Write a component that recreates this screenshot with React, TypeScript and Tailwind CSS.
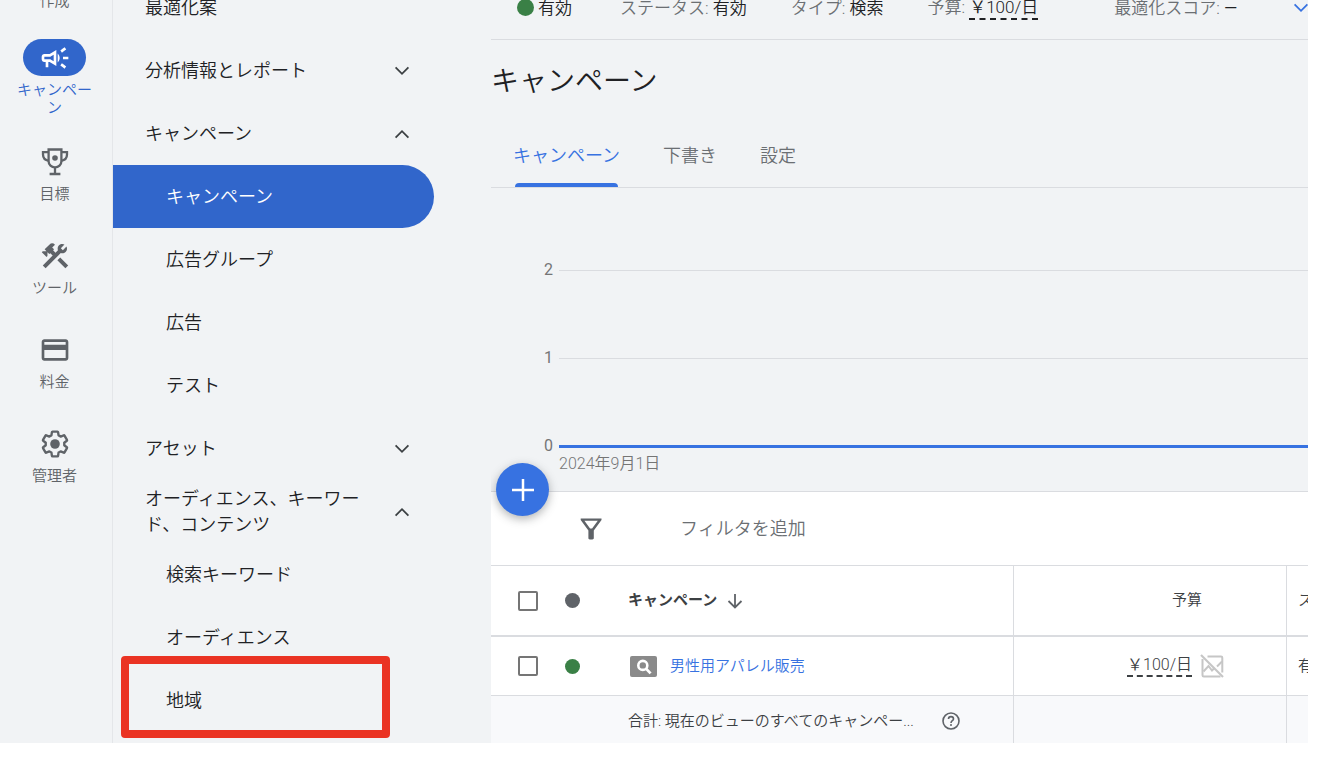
import { useState } from "react";
import type { ReactNode } from "react";
import {
  MdConstruction,
  MdOutlineCampaign,
  MdOutlineCreditCard,
} from "react-icons/md";
import clsx from "clsx";

interface NavEntry {
  label: string;
  kind: "link" | "group" | "child";
  open?: boolean;
  marked?: boolean;
}

const NAV: NavEntry[] = [
  { label: "最適化案", kind: "link" },
  { label: "分析情報とレポート", kind: "group", open: false },
  { label: "キャンペーン", kind: "group", open: true },
  { label: "キャンペーン", kind: "child" },
  { label: "広告グループ", kind: "child" },
  { label: "広告", kind: "child" },
  { label: "テスト", kind: "child" },
  { label: "アセット", kind: "group", open: false },
  { label: "オーディエンス、キーワード、コンテンツ", kind: "group", open: true },
  { label: "検索キーワード", kind: "child" },
  { label: "オーディエンス", kind: "child" },
  { label: "地域", kind: "child", marked: true },
];

const TABS = ["キャンペーン", "下書き", "設定"];

function TrophyIcon() {
  return (
    <svg viewBox="0 0 32 32" className="size-8" fill="none" stroke="currentColor" strokeWidth="2.3">
      <path d="M9.600 3.500h12.800v11.700c0 3.600-2.900 6.200-6.400 6.200s-6.400-2.600-6.400-6.200z" />
      <path d="M9.600 6.100H4v2.400c0 3.400 2.400 5.800 5.800 6.400M22.400 6.100H28v2.400c0 3.400-2.400 5.800-5.800 6.400" />
      <path d="M16 21.400v6.400M10.600 28h10.800" />
      <circle cx="16" cy="12" r="2.800" fill="currentColor" stroke="none" />
    </svg>
  );
}

function GearIcon() {
  return (
    <svg viewBox="0 0 24 24" className="size-8">
      <path
        transform="translate(12 12) scale(.93) translate(-12 -12)"
        fill="none"
        stroke="currentColor"
        strokeWidth="1.9"
        strokeLinejoin="round"
        d="M19.43 12.98c.04-.32.07-.64.07-.98 0-.34-.03-.66-.07-.98l2.11-1.65c.19-.15.24-.42.12-.64l-2-3.46a.5.5 0 0 0-.61-.22l-2.49 1c-.52-.4-1.08-.73-1.69-.98l-.38-2.65A.488.488 0 0 0 14 2h-4c-.25 0-.46.18-.49.42l-.38 2.65c-.61.25-1.17.59-1.69.98l-2.49-1a.5.5 0 0 0-.61.22l-2 3.46c-.13.22-.07.49.12.64l2.11 1.65c-.04.32-.07.65-.07.98 0 .33.03.66.07.98l-2.11 1.65c-.19.15-.24.42-.12.64l2 3.46a.5.5 0 0 0 .61.22l2.49-1c.52.4 1.08.73 1.69.98l.38 2.65c.03.24.24.42.49.42h4c.25 0 .46-.18.49-.42l.38-2.65c.61-.25 1.17-.59 1.69-.98l2.49 1a.5.5 0 0 0 .61-.22l2-3.46c.12-.22.07-.49-.12-.64z"
      />
      <circle cx="12" cy="12" r="3.6" fill="currentColor" />
    </svg>
  );
}

function Chevron({ up, className }: { up?: boolean; className?: string }) {
  return (
    <svg
      viewBox="0 0 16 16"
      className={clsx("size-4 shrink-0", className)}
      fill="none"
      stroke="currentColor"
      strokeWidth="1.8"
    >
      <path d={up ? "M1.6 11.6 8 5.2l6.4 6.400" : "M1.6 4.4 8 10.8l6.4-6.400"} />
    </svg>
  );
}

function FunnelIcon() {
  return (
    <svg viewBox="0 0 24 24" className="size-6 text-[#5f6368]">
      <path
        fill="currentColor"
        fillRule="evenodd"
        d="M1.7 1.5h20.8v1.6l-7.7 10.4v7.6c0 1-.6 1.4-1.4 1.4h-2.6c-.8 0-1.4-.4-1.4-1.4v-7.6L1.7 3.1zM5.400 3.8l5.700 7.800h2l5.700-7.800z"
      />
    </svg>
  );
}

function SearchCampaignIcon() {
  return (
    <svg viewBox="0 0 27 21" className="h-[21px] w-[27px] shrink-0">
      <rect width="27" height="21" rx="2" fill="#8a8a8a" />
      <circle cx="12.8" cy="9.4" r="4.5" fill="none" stroke="#fff" strokeWidth="2.6" />
      <path d="m16 12.6 4.6 4.8" stroke="#fff" strokeWidth="2.8" />
    </svg>
  );
}

function ChartOffIcon() {
  return (
    <svg viewBox="0 0 24 24" className="size-6" fill="none" stroke="#c6c6c6" strokeWidth="2">
      <path d="M7.500 2.500H21c.9 0 1.300.4 1.300 1.300V18.500M2.500 5v16.200c0 .8.400 1.300 1.300 1.300H20.500" />
      <path d="m3.500 17.500 5-5.500 3.500 4.500 2.500-2.500M17 12.500l5-5" />
      <path d="m1 1 22 22" strokeWidth="2.200" />
    </svg>
  );
}

function HelpIcon() {
  return (
    <svg viewBox="0 0 18 18" className="size-[18px] shrink-0" fill="none" stroke="#5f6368" strokeWidth="1.6">
      <circle cx="9" cy="9" r="8" />
      <path d="M6.500 7.100C6.500 5.600 7.600 4.600 9 4.600s2.500 1 2.500 2.300c0 1.700-2.500 2-2.500 4" />
      <circle cx="9" cy="13" r="1" fill="#5f6368" stroke="none" />
    </svg>
  );
}

function RailItem({ icon, label, active }: { icon: ReactNode; label: string; active?: boolean }) {
  return (
    <button
      type="button"
      className={clsx(
        "flex w-full flex-col items-center px-3",
        active ? "text-[#3166cb]" : "text-[#5f6368]"
      )}
    >
      <span
        className={clsx(
          "flex h-[37px] w-[63px] items-center justify-center rounded-full",
          active && "bg-[#3166cb] text-white"
        )}
      >
        {icon}
      </span>
      <span className="mt-[5px] min-h-[26px] text-[15px] leading-[18px]">{label}</span>
    </button>
  );
}

function Rail() {
  return (
    <nav className="flex w-[113px] shrink-0 flex-col gap-[26px] border-r border-[#e4e6e9] pr-[3px]">
      <button
        type="button"
        className="-mt-2 flex h-[21px] justify-center text-[15px] leading-[18px] text-[#5f6368]"
      >
        作成
      </button>
      <RailItem active icon={<MdOutlineCampaign className="size-8" />} label="キャンペーン" />
      <RailItem icon={<TrophyIcon />} label="目標" />
      <RailItem icon={<MdConstruction className="size-8" />} label="ツール" />
      <RailItem icon={<MdOutlineCreditCard className="size-8" />} label="料金" />
      <RailItem icon={<GearIcon />} label="管理者" />
    </nav>
  );
}

function SideNav() {
  const [selected, setSelected] = useState(3);

  return (
    <nav className="w-[378px] shrink-0 text-lg text-[#202124]">
      <ul className="-mt-6">
        {NAV.map((item, i) => (
          <li key={i} className="relative mr-[57px]">
            {item.kind === "group" ? (
              <button
                type="button"
                aria-expanded={item.open}
                className="flex h-[63px] w-full items-center justify-between pr-6 pl-8 text-left leading-[26px]"
              >
                <span className="w-[222px]">{item.label}</span>
                <Chevron up={item.open} className="text-[#3c4043]" />
              </button>
            ) : (
              <a
                href="#"
                onClick={() => setSelected(i)}
                className={clsx(
                  "flex h-[63px] items-center leading-[26px]",
                  item.kind === "child" ? "pl-[53px]" : "pl-8",
                  selected === i && "rounded-r-full bg-[#3166cb] text-white"
                )}
              >
                {item.label}
              </a>
            )}
            {item.marked && (
              <span className="pointer-events-none absolute -top-[13px] left-2 h-[82px] w-[269px] rounded-sm border-8 border-[#ea3323]" />
            )}
          </li>
        ))}
      </ul>
    </nav>
  );
}

function Field({ name, children }: { name: string; children: ReactNode }) {
  return (
    <span className="shrink-0 text-[#6b6f73]">
      {name}: <span className="text-[#202124]">{children}</span>
    </span>
  );
}

function StatusBar() {
  return (
    <div className="flex h-10 items-start overflow-hidden border-b border-[#dadce0] pl-[26px] text-[17px] leading-6 whitespace-nowrap">
      <div className="-mt-[5px] flex shrink-0 items-center gap-11">
        <span className="mr-1 flex items-center gap-1 text-[#202124]">
          <span className="size-[17px] rounded-full bg-[#3a8046]" />
          有効
        </span>
        <Field name="ステータス">有効</Field>
        <Field name="タイプ">検索</Field>
        <Field name="予算">
          <span className="inline-block border-b-2 border-dashed border-[#202124] leading-[22px]">
            ￥100/日
          </span>
        </Field>
        <span className="ml-8">
          <Field name="最適化スコア">
            <span className="font-normal">—</span>
          </Field>
        </span>
        <Chevron className="ml-3 text-[#3772e1]" />
      </div>
    </div>
  );
}

function Tabs() {
  const [tab, setTab] = useState(TABS[0]);

  return (
    <div role="tablist" className="flex h-16 gap-[43px] border-b border-[#dadce0] pl-[22px] text-lg">
      {TABS.map((name) => (
        <button
          key={name}
          type="button"
          role="tab"
          aria-selected={tab === name}
          onClick={() => setTab(name)}
          className={clsx("relative", tab === name ? "text-[#3772e1]" : "text-[#6b6f73]")}
        >
          {name}
          {tab === name && (
            <span className="absolute inset-x-0.5 bottom-0 h-1 rounded-t bg-[#3772e1]" />
          )}
        </button>
      ))}
    </div>
  );
}

function Chart() {
  return (
    <div className="h-[303px] pt-[70px] text-base text-[#757575]">
      <div className="flex flex-col gap-16">
        {[2, 1, 0].map((n) => (
          <div key={n} className="flex h-6 items-center font-normal">
            <span className="w-[62px] text-right">{n}</span>
            <span
              className={clsx("ml-1.5 flex-1", n === 0 ? "h-[3px] bg-[#3772e1]" : "h-px bg-[#dadce0]")}
            />
          </div>
        ))}
      </div>
      <p className="-mt-1.5 pl-[68px]">2024年9月1日</p>
    </div>
  );
}

function FilterBar() {
  return (
    <div className="relative flex h-[75px] items-center border-y border-[#dadce0] bg-white">
      <button
        type="button"
        aria-label="新規作成"
        className="absolute -top-[29px] left-[5px] flex size-[53px] items-center justify-center rounded-full bg-[#3772e1] shadow-[0_3px_10px_rgba(60,64,67,0.4)]"
      >
        <svg viewBox="0 0 22 22" className="size-[22px]" stroke="#fff" strokeWidth="2.500">
          <path d="M11 0v22M0 11h22" />
        </svg>
      </button>
      <span className="ml-[88px]">
        <FunnelIcon />
      </span>
      <label htmlFor="filter" className="sr-only">
        フィルタ
      </label>
      <input
        id="filter"
        placeholder="フィルタを追加"
        className="ml-[77px] min-w-0 flex-1 text-lg outline-none placeholder:text-[#6b6f73]"
      />
    </div>
  );
}

function CheckBox({ label }: { label: string }) {
  return (
    <input
      type="checkbox"
      aria-label={label}
      className="block size-5 appearance-none rounded-xs border-2 border-[#757575] bg-white checked:bg-[#3772e1]"
    />
  );
}

function CampaignTable() {
  return (
    <table className="w-full table-fixed border-separate border-spacing-0 bg-white text-left text-[15px] whitespace-nowrap text-[#3c4043]">
      <colgroup>
        <col className="w-[74px]" />
        <col className="w-[63px]" />
        <col className="w-[385px]" />
        <col className="w-[273px]" />
        <col />
      </colgroup>
      <thead>
        <tr className="h-[71px] *:border-b-2 *:border-[#dadce0]">
          <th className="pl-[27px]">
            <CheckBox label="すべて選択" />
          </th>
          <th>
            <span className="block size-[15px] rounded-full bg-[#5f6368]" />
          </th>
          <th className="font-bold">
            <span className="flex items-center gap-2.5">
              キャンペーン
              <svg viewBox="0 0 16 16" className="size-4" fill="none" stroke="#5f6368" strokeWidth="1.800">
                <path d="M8 1v13.500M1.500 8 8 14.500 14.500 8" />
              </svg>
            </span>
          </th>
          <th className="border-l pr-[84px] text-right font-[350]">予算</th>
          <th className="overflow-hidden border-l pl-[11px] font-[350]">ステータス</th>
        </tr>
      </thead>
      <tbody>
        <tr className="h-[59px] *:border-b *:border-[#dadce0]">
          <td className="pl-[27px]">
            <CheckBox label="男性用アパレル販売を選択" />
          </td>
          <td>
            <span className="block size-[15px] rounded-full bg-[#3a8046]" />
          </td>
          <td>
            <span className="flex items-center gap-[13px] pl-0.5">
              <SearchCampaignIcon />
              <a href="#" className="text-[#3772e1]">
                男性用アパレル販売
              </a>
            </span>
          </td>
          <td className="border-l pr-[62px]">
            <span className="flex items-center justify-end gap-2 text-base">
              <span className="border-b-2 border-dashed border-[#3c4043] leading-5">￥100/日</span>
              <ChartOffIcon />
            </span>
          </td>
          <td className="overflow-hidden border-l pl-[11px]">有効</td>
        </tr>
      </tbody>
      <tfoot>
        <tr className="h-[50px] bg-[#f8f9fb]">
          <td />
          <td />
          <td>
            <span className="flex items-center gap-7">
              合計: 現在のビューのすべてのキャンペー...
              <HelpIcon />
            </span>
          </td>
          <td className="border-l border-[#dadce0]" />
          <td className="border-l border-[#dadce0]" />
        </tr>
      </tfoot>
    </table>
  );
}

export default function App() {
  return (
    <div className="h-screen overflow-hidden bg-white pr-[18px] pb-[15px] font-['Roboto','Noto_Sans_CJK_JP',sans-serif] font-[350]">
      <div className="flex h-full overflow-hidden bg-[#f1f3f5]">
        <Rail />
        <SideNav />
        <main className="min-w-0 flex-1 overflow-hidden">
          <StatusBar />
          <h1 className="flex h-[84px] items-center text-[28px] text-[#202124]">キャンペーン</h1>
          <Tabs />
          <Chart />
          <FilterBar />
          <CampaignTable />
        </main>
      </div>
    </div>
  );
}
